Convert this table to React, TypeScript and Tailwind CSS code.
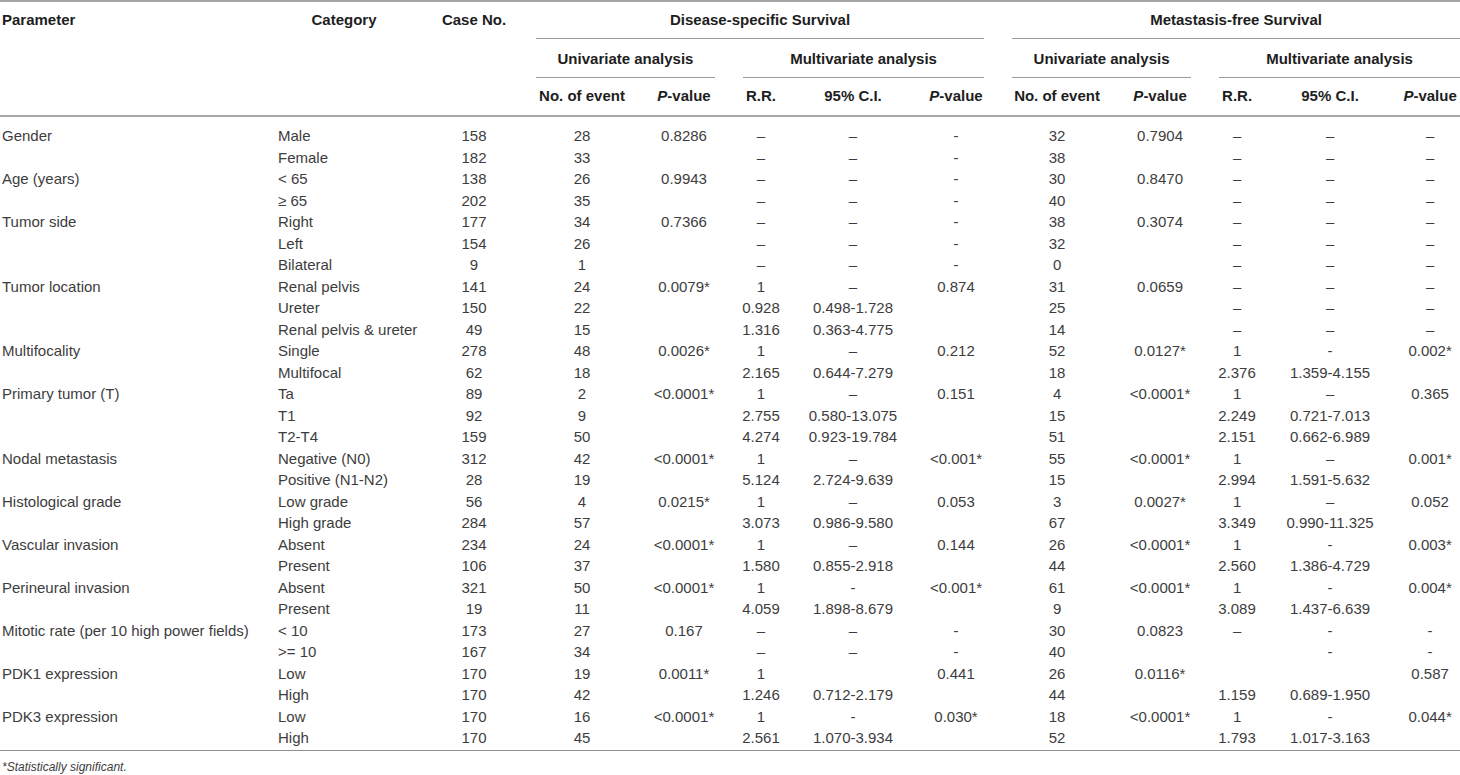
const D = '–';

type Row = [string, string, string, string, string, string, string, string, string, string, string, string, string];

// parameter, category, case, DSS: event, p, rr, ci, p | MFS: event, p, rr, ci, p
const rows: Row[] = [
  ['Gender', 'Male', '158', '28', '0.8286', D, D, '-', '32', '0.7904', D, D, D],
  ['', 'Female', '182', '33', '', D, D, '-', '38', '', D, D, D],
  ['Age (years)', '< 65', '138', '26', '0.9943', D, D, '-', '30', '0.8470', D, D, D],
  ['', '≥ 65', '202', '35', '', D, D, '-', '40', '', D, D, D],
  ['Tumor side', 'Right', '177', '34', '0.7366', D, D, '-', '38', '0.3074', D, D, D],
  ['', 'Left', '154', '26', '', D, D, '-', '32', '', D, D, D],
  ['', 'Bilateral', '9', '1', '', D, D, '-', '0', '', D, D, D],
  ['Tumor location', 'Renal pelvis', '141', '24', '0.0079*', '1', D, '0.874', '31', '0.0659', D, D, D],
  ['', 'Ureter', '150', '22', '', '0.928', '0.498-1.728', '', '25', '', D, D, D],
  ['', 'Renal pelvis & ureter', '49', '15', '', '1.316', '0.363-4.775', '', '14', '', D, D, D],
  ['Multifocality', 'Single', '278', '48', '0.0026*', '1', D, '0.212', '52', '0.0127*', '1', '-', '0.002*'],
  ['', 'Multifocal', '62', '18', '', '2.165', '0.644-7.279', '', '18', '', '2.376', '1.359-4.155', ''],
  ['Primary tumor (T)', 'Ta', '89', '2', '<0.0001*', '1', D, '0.151', '4', '<0.0001*', '1', D, '0.365'],
  ['', 'T1', '92', '9', '', '2.755', '0.580-13.075', '', '15', '', '2.249', '0.721-7.013', ''],
  ['', 'T2-T4', '159', '50', '', '4.274', '0.923-19.784', '', '51', '', '2.151', '0.662-6.989', ''],
  ['Nodal metastasis', 'Negative (N0)', '312', '42', '<0.0001*', '1', D, '<0.001*', '55', '<0.0001*', '1', D, '0.001*'],
  ['', 'Positive (N1-N2)', '28', '19', '', '5.124', '2.724-9.639', '', '15', '', '2.994', '1.591-5.632', ''],
  ['Histological grade', 'Low grade', '56', '4', '0.0215*', '1', D, '0.053', '3', '0.0027*', '1', D, '0.052'],
  ['', 'High grade', '284', '57', '', '3.073', '0.986-9.580', '', '67', '', '3.349', '0.990-11.325', ''],
  ['Vascular invasion', 'Absent', '234', '24', '<0.0001*', '1', D, '0.144', '26', '<0.0001*', '1', '-', '0.003*'],
  ['', 'Present', '106', '37', '', '1.580', '0.855-2.918', '', '44', '', '2.560', '1.386-4.729', ''],
  ['Perineural invasion', 'Absent', '321', '50', '<0.0001*', '1', '-', '<0.001*', '61', '<0.0001*', '1', '-', '0.004*'],
  ['', 'Present', '19', '11', '', '4.059', '1.898-8.679', '', '9', '', '3.089', '1.437-6.639', ''],
  ['Mitotic rate (per 10 high power fields)', '< 10', '173', '27', '0.167', D, D, '-', '30', '0.0823', D, '-', '-'],
  ['', '>= 10', '167', '34', '', D, D, '-', '40', '', '', '-', '-'],
  ['PDK1 expression', 'Low', '170', '19', '0.0011*', '1', '', '0.441', '26', '0.0116*', '', '', '0.587'],
  ['', 'High', '170', '42', '', '1.246', '0.712-2.179', '', '44', '', '1.159', '0.689-1.950', ''],
  ['PDK3 expression', 'Low', '170', '16', '<0.0001*', '1', '-', '0.030*', '18', '<0.0001*', '1', '-', '0.044*'],
  ['', 'High', '170', '45', '', '2.561', '1.070-3.934', '', '52', '', '1.793', '1.017-3.163', ''],
];

const widths = [276, 136, 124, 92, 112, 42, 142, 64, 138, 68, 86, 100, 80];

function PValue() {
  return (
    <>
      <i>P</i>-value
    </>
  );
}

export default function App() {
  return (
    <div className="w-[1460px] h-[775px] bg-white font-['Liberation_Sans',Arial,sans-serif] overflow-hidden">
      <table className="w-[1460px] table-fixed border-collapse">
        <colgroup>
          {widths.map((w, i) => (
            <col key={i} style={{ width: w }} />
          ))}
        </colgroup>
        <thead className="text-[15px] font-bold text-[#1e1e1e]">
          {/* Group row */}
          <tr className="border-t-2 border-[#a3a3a3]">
            <th className="p-0 h-[37px] text-left pl-[2px] align-middle font-bold">Parameter</th>
            <th className="p-0 text-center align-middle font-bold">Category</th>
            <th className="p-0 text-center align-middle font-bold">Case No.</th>
            <th colSpan={5} className="p-0 align-top">
              <div className="h-[37px] mr-[4px] flex items-center justify-center border-b border-[#9a9a9a]">
                Disease-specific Survival
              </div>
            </th>
            <th colSpan={5} className="p-0 align-top">
              <div className="h-[37px] ml-[24px] flex items-center justify-center border-b border-[#9a9a9a]">
                Metastasis-free Survival
              </div>
            </th>
          </tr>
          {/* Analysis row */}
          <tr>
            <th colSpan={3} className="p-0 h-[39px]" />
            <th colSpan={2} className="p-0 align-top">
              <div className="h-[39px] mr-[25px] pt-[2px] flex items-center justify-center border-b border-[#9a9a9a]">
                Univariate analysis
              </div>
            </th>
            <th colSpan={3} className="p-0 align-top">
              <div className="h-[39px] ml-[3px] mr-[4px] pt-[2px] flex items-center justify-center border-b border-[#9a9a9a]">
                Multivariate analysis
              </div>
            </th>
            <th colSpan={2} className="p-0 align-top">
              <div className="h-[39px] ml-[24px] mr-[3px] pt-[2px] flex items-center justify-center border-b border-[#9a9a9a]">
                Univariate analysis
              </div>
            </th>
            <th colSpan={3} className="p-0 align-top">
              <div className="h-[39px] ml-[25px] pt-[2px] flex items-center justify-center border-b border-[#9a9a9a]">
                Multivariate analysis
              </div>
            </th>
          </tr>
          {/* Column row */}
          <tr className="border-b-2 border-[#a8a8a8] h-[38px]">
            <th colSpan={3} className="p-0" />
            <th className="p-0 text-center whitespace-nowrap">No. of event</th>
            <th className="p-0 text-center">
              <PValue />
            </th>
            <th className="p-0 text-center">R.R.</th>
            <th className="p-0 text-center">95% C.I.</th>
            <th className="p-0 text-center">
              <PValue />
            </th>
            <th className="p-0 text-center whitespace-nowrap">No. of event</th>
            <th className="p-0 text-center">
              <PValue />
            </th>
            <th className="p-0 text-center">R.R.</th>
            <th className="p-0 text-center">95% C.I.</th>
            <th className="p-0 pl-[20px] text-center whitespace-nowrap">
              <PValue />
            </th>
          </tr>
        </thead>
        <tbody className="text-[15px] text-[#3d3d3d]">
          <tr className="h-[9px]">
            <td colSpan={13} className="p-0" />
          </tr>
          {rows.map((r, i) => (
            <tr key={i} className="h-[21.5px] leading-[21.5px]">
              {r.map((cell, j) => (
                <td
                  key={j}
                  className={
                    j === 0
                      ? 'p-0 pl-[2px] text-left whitespace-nowrap'
                      : j === 1
                        ? 'p-0 pl-[2px] text-left whitespace-nowrap'
                        : j === 12
                          ? 'p-0 pl-[20px] text-center whitespace-nowrap'
                          : 'p-0 text-center whitespace-nowrap'
                  }
                >
                  {cell}
                </td>
              ))}
            </tr>
          ))}
          <tr className="h-[2px] border-b border-[#8f8f8f]">
            <td colSpan={13} className="p-0" />
          </tr>
        </tbody>
      </table>
      <p className="pt-[9px] pl-[2px] text-[12px] leading-[14px] italic text-[#3d3d3d]">*Statistically significant.</p>
    </div>
  );
}
